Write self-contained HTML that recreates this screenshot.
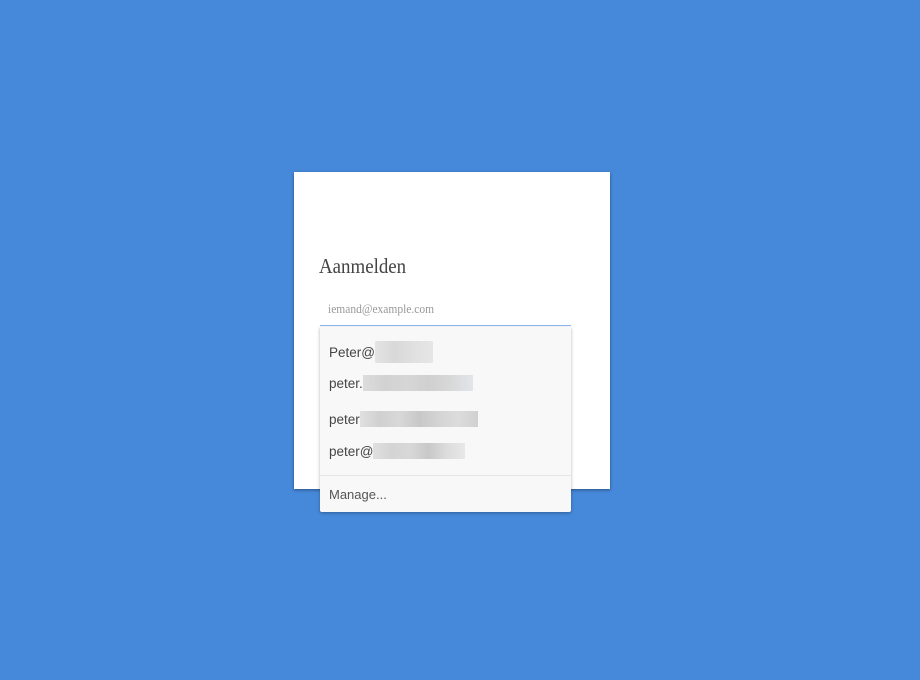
<!DOCTYPE html>
<html><head><style>
body{margin:0;width:920px;height:680px;background:#4688d9;position:relative;overflow:hidden;font-family:"Liberation Sans",sans-serif}
.card{position:absolute;left:294px;top:172px;width:316px;height:317px;background:#fff;box-shadow:0 1px 3px rgba(0,0,0,.4)}
.t{position:absolute;left:319px;top:254px;font-family:"Liberation Serif",serif;font-size:21px;color:#444;transform:scaleX(.9);transform-origin:left}
.ph{position:absolute;left:328px;top:302px;font-family:"Liberation Serif",serif;font-size:12.5px;color:#999;transform:scaleX(.92);transform-origin:left}
.ul{position:absolute;left:320px;top:325px;width:251px;height:1px;background:#8ab4e8;z-index:2}
.dd{position:absolute;left:320px;top:327px;width:251px;height:185px;background:#f8f8f8;box-shadow:0 1px 3px rgba(0,0,0,.3);border-radius:0 0 2px 2px}
.it{position:absolute;left:329px;font-size:13.5px;color:#444;display:flex;align-items:center}
.b{display:inline-block;height:22px}
.sep{position:absolute;left:320px;top:475px;width:251px;height:1px;background:#e6e6e6}
</style></head><body>
<div class="card"></div>
<div class="t">Aanmelden</div>
<div class="ph">iemand@example.com</div>
<div class="dd"></div>
<div class="ul"></div>
<div class="it" style="top:341px">Peter@<span class="b" style="width:58px;background:linear-gradient(90deg,#e4e4e4,#d8d8d8,#e0e0e0,#e6e6e6)"></span></div>
<div class="it" style="top:375px">peter.<span class="b" style="width:110px;height:16px;background:linear-gradient(90deg,#dcdcdc,#d2d2d2,#d6d6d6,#d0d0d0,#d8d8d8,#e2e6ea)"></span></div>
<div class="it" style="top:411px">peter<span class="b" style="width:118px;height:16px;background:linear-gradient(90deg,#e0e0e0,#d0d0d0,#d8d8d8,#c8c8c8,#d4d4d4,#dcdcdc,#d0d0d0)"></span></div>
<div class="it" style="top:443px">peter@<span class="b" style="width:92px;height:16px;background:linear-gradient(90deg,#e0e0e0,#d4d4d4,#d8d8d8,#c8c8c8,#dcdcdc,#e8e8e8)"></span></div>
<div class="sep"></div>
<div class="it" style="top:487px;font-size:13px;color:#555">Manage...</div>
</body></html>
